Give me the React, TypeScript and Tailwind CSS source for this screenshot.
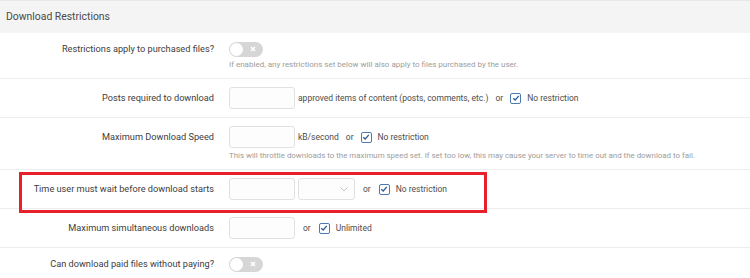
import React from 'react';

const Check: React.FC = () => (
    <span className="inline-flex items-center justify-center w-[11px] h-[11px] border border-[#4d79b3] rounded-[2px] bg-white">
        <svg width="8" height="8" viewBox="0 0 8 8">
            <path d="M1.2 4.2 L3.2 6 L6.8 1.8" fill="none" stroke="#2f5d99" strokeWidth="1.3" />
        </svg>
    </span>
);

const Toggle: React.FC = () => (
    <div className="flex items-center w-[34px] h-[15px] rounded-full bg-[#d6d6d6] px-[1px]">
        <span className="w-[13px] h-[13px] rounded-full bg-white" />
        <span className="flex-1 flex justify-center">
            <svg width="6" height="6" viewBox="0 0 6 6">
                <path d="M1 1 L5 5 M5 1 L1 5" stroke="#fff" strokeWidth="1.6" />
            </svg>
        </span>
    </div>
);

const Input: React.FC = () => (
    <div className="w-[66px] h-[22px] border border-[#e1e1e1] rounded-[3px] bg-[#fdfdfd]" />
);

const Select: React.FC = () => (
    <div className="w-[57px] h-[22px] border border-[#e1e1e1] rounded-[3px] bg-[#fdfdfd] flex items-center justify-end pr-[6px]">
        <svg width="8" height="5" viewBox="0 0 8 5">
            <path d="M0.5 0.5 L4 4 L7.5 0.5" fill="none" stroke="#c2c2c2" strokeWidth="1" />
        </svg>
    </div>
);

type RowProps = {
    label: string;
    labelH: string;
    pad: string;
    border?: boolean;
    children: React.ReactNode;
};

const Row: React.FC<RowProps> = ({ label, labelH, pad, border = true, children }) => (
    <div className={`grid grid-cols-[214px_1fr] gap-x-[15px] ${pad} ${border ? 'border-b border-[#ededed]' : ''}`}>
        <div className={`flex items-center justify-end ${labelH} text-[9.2px] text-[#404040] whitespace-nowrap`}>
            {label}
        </div>
        <div>{children}</div>
    </div>
);

const App: React.FC = () => {
    return (
        <div className="relative w-[750px] h-[278px] overflow-hidden bg-white font-['Roboto',sans-serif]">
            {/* Header */}
            <div className="h-[33px] bg-[#f4f4f4] border-t border-[#e8e8e8] pl-[6px] flex items-center text-[10.4px] text-[#4a4a4a]">
                Download Restrictions
            </div>

            <Row label="Restrictions apply to purchased files?" labelH="h-[16px]" pad="pt-[8px] pb-[7px]">
                <div className="h-[16px] flex items-center">
                    <Toggle />
                </div>
                <p className="mt-[2px] leading-[12px] text-[8px] text-[#9d9d9d] whitespace-nowrap">
                    If enabled, any restrictions set below will also apply to files purchased by the user.
                </p>
            </Row>

            <Row label="Posts required to download" labelH="h-[22px]" pad="py-[8px]">
                <div className="flex items-center h-[22px] text-[8.5px] text-[#4d4d4d] whitespace-nowrap">
                    <Input />
                    <span className="ml-[3px]">approved items of content (posts, comments, etc.)</span>
                    <span className="mx-[7px]">or</span>
                    <Check />
                    <span className="ml-[6px]">No restriction</span>
                </div>
            </Row>

            <Row label="Maximum Download Speed" labelH="h-[22px]" pad="pt-[8px] pb-[7px]">
                <div className="flex items-center h-[22px] text-[8.5px] text-[#4d4d4d] whitespace-nowrap">
                    <Input />
                    <span className="ml-[3px]">kB/second</span>
                    <span className="mx-[7px]">or</span>
                    <Check />
                    <span className="ml-[6px]">No restriction</span>
                </div>
                <p className="mt-[2px] leading-[12px] text-[7.9px] text-[#9d9d9d] whitespace-nowrap">
                    This will throttle downloads to the maximum speed set. If set too low, this may cause your server to time out and the download to fail.
                </p>
            </Row>

            <Row label="Time user must wait before download starts" labelH="h-[22px]" pad="py-[8px]">
                <div className="flex items-center h-[22px] text-[8.5px] text-[#4d4d4d] whitespace-nowrap">
                    <Input />
                    <span className="ml-[3px]">
                        <Select />
                    </span>
                    <span className="mx-[8px]">or</span>
                    <Check />
                    <span className="ml-[6px]">No restriction</span>
                </div>
            </Row>

            <Row label="Maximum simultaneous downloads" labelH="h-[22px]" pad="py-[8px]">
                <div className="flex items-center h-[22px] text-[8.5px] text-[#4d4d4d] whitespace-nowrap">
                    <Input />
                    <span className="mx-[8px]">or</span>
                    <Check />
                    <span className="ml-[6px]">Unlimited</span>
                </div>
            </Row>

            <Row label="Can download paid files without paying?" labelH="h-[16px]" pad="pt-[8px]" border={false}>
                <div className="h-[16px] flex items-center">
                    <Toggle />
                </div>
            </Row>

            {/* Highlight annotation */}
            <div className="absolute left-[19px] top-[172px] w-[468px] h-[41px] border-[3px] border-[#e8202a]" />
        </div>
    );
};

export default App;
